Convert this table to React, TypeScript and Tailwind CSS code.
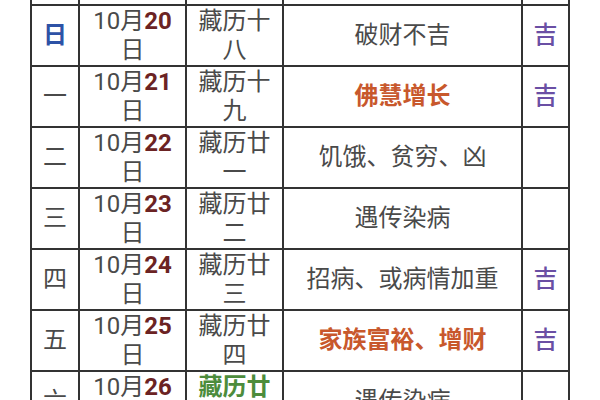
import React from "react";

type Row = {
  week: string;
  weekClass?: string;
  day: string;
  tib1: string;
  tib2: string;
  tibClass?: string;
  desc: string;
  descClass?: string;
  luck?: string;
};

const rows: Row[] = [
  { week: "", day: "", tib1: "", tib2: "", desc: "" },
  { week: "日", weekClass: "text-[#2d52a6] font-bold", day: "20", tib1: "藏历十", tib2: "八", desc: "破财不吉", luck: "吉" },
  { week: "一", day: "21", tib1: "藏历十", tib2: "九", desc: "佛慧增长", descClass: "text-[#c8582c] font-bold", luck: "吉" },
  { week: "二", day: "22", tib1: "藏历廿", tib2: "一", desc: "饥饿、贫穷、凶" },
  { week: "三", day: "23", tib1: "藏历廿", tib2: "二", desc: "遇传染病" },
  { week: "四", day: "24", tib1: "藏历廿", tib2: "三", desc: "招病、或病情加重", luck: "吉" },
  { week: "五", day: "25", tib1: "藏历廿", tib2: "四", desc: "家族富裕、增财", descClass: "text-[#c8582c] font-bold", luck: "吉" },
  { week: "六", day: "26", tib1: "藏历廿", tib2: "五", tibClass: "text-[#4c8c3c] font-bold", desc: "遇传染病" },
];

const cell = "flex flex-col items-center justify-center text-center border-r-2 border-[#333] shrink-0";

export default function App() {
  return (
    <div
      className="w-[600px] h-[400px] overflow-hidden bg-white text-[#4a4a4a] text-[24px] leading-[29px]"
      style={{ fontFamily: '"Roboto", "Noto Sans CJK SC", sans-serif' }}
    >
      <div className="ml-[30px] mt-[-55px] w-[540px] border-l-2 border-[#333]">
        {rows.map((r, i) => (
          <div key={i} className="flex h-[61px] border-b-2 border-[#333]">
            <div className={`${cell} w-[48px] ${r.weekClass ?? ""}`}>{r.week}</div>
            <div className={`${cell} w-[107px]`}>
              {r.day && (
                <>
                  <div>
                    10月<span className="font-bold text-[#6b2323]">{r.day}</span>
                  </div>
                  <div>日</div>
                </>
              )}
            </div>
            <div className={`${cell} w-[97px] ${r.tibClass ?? ""}`}>
              <div>{r.tib1}</div>
              <div>{r.tib2}</div>
            </div>
            <div className={`${cell} w-[239px] ${r.descClass ?? ""}`}>{r.desc}</div>
            <div className={`${cell} w-[47px] text-[#6a4fa4] font-medium`}>{r.luck}</div>
          </div>
        ))}
      </div>
    </div>
  );
}
